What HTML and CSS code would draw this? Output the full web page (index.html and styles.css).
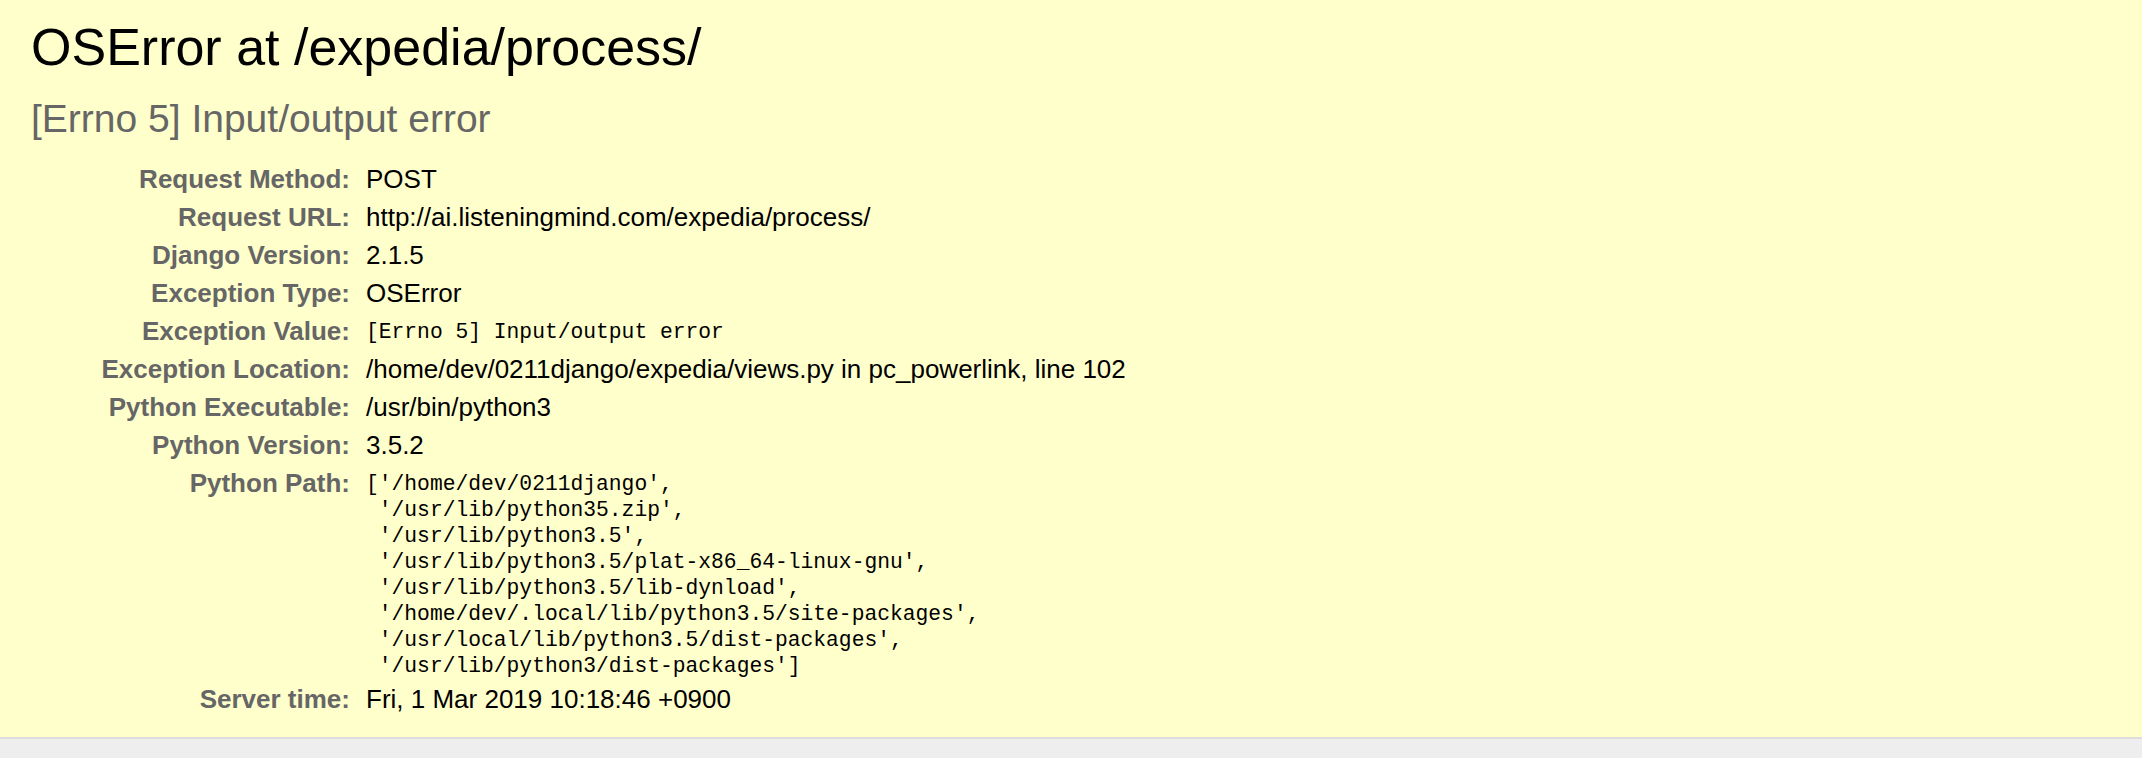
FILE: index.html
```html
<!DOCTYPE html>
<html lang="en">
<head>
<meta charset="utf-8">
<title>OSError at /expedia/process/</title>
<link rel="stylesheet" href="styles.css">
</head>
<body>
<div class="summary">
  <h1 class="title">OSError at /expedia/process/</h1>
  <h2 class="subtitle">[Errno 5] Input/output error</h2>
  <table class="meta">
    <tbody>
      <tr><th class="label">Request Method:</th><td class="value">POST</td></tr>
      <tr><th class="label">Request URL:</th><td class="value">http://ai.listeningmind.com/expedia/process/</td></tr>
      <tr><th class="label">Django Version:</th><td class="value">2.1.5</td></tr>
      <tr><th class="label">Exception Type:</th><td class="value">OSError</td></tr>
      <tr><th class="label">Exception Value:</th><td class="value"><pre class="code">[Errno 5] Input/output error</pre></td></tr>
      <tr><th class="label">Exception Location:</th><td class="value">/home/dev/0211django/expedia/views.py in pc_powerlink, line 102</td></tr>
      <tr><th class="label">Python Executable:</th><td class="value">/usr/bin/python3</td></tr>
      <tr><th class="label">Python Version:</th><td class="value">3.5.2</td></tr>
      <tr><th class="label">Python Path:</th><td class="value"><pre class="code">['/home/dev/0211django',
 '/usr/lib/python35.zip',
 '/usr/lib/python3.5',
 '/usr/lib/python3.5/plat-x86_64-linux-gnu',
 '/usr/lib/python3.5/lib-dynload',
 '/home/dev/.local/lib/python3.5/site-packages',
 '/usr/local/lib/python3.5/dist-packages',
 '/usr/lib/python3/dist-packages']</pre></td></tr>
      <tr><th class="label">Server time:</th><td class="value">Fri, 1 Mar 2019 10:18:46 +0900</td></tr>
    </tbody>
  </table>
</div>
<div class="next-section"></div>
</body>
</html>
```

FILE: styles.css
```css
html, body {
  margin: 0;
  padding: 0;
}

body {
  font-family: "Liberation Sans", Arial, Helvetica, sans-serif;
  font-size: 26px;
  color: #000;
  background: #eee;
}

.summary {
  background: #ffc;
  padding: 17px 31px 19px;
  border-bottom: 2px solid #ddd;
}

.title {
  margin: 0;
  font-size: 52px;
  line-height: 60px;
  font-weight: normal;
}

.subtitle {
  margin: 19px 0 0;
  font-size: 39px;
  line-height: 45px;
  font-weight: normal;
  color: #666;
}

.meta {
  margin-top: 19px;
  border-collapse: collapse;
  border: none;
  background: transparent;
}

.label {
  width: 319px;
  padding: 4px 0;
  text-align: right;
  vertical-align: top;
  font-weight: bold;
  color: #666;
  font-size: 26px;
  line-height: 30px;
}

.value {
  padding: 4px 0 4px 16px;
  vertical-align: top;
  font-size: 26px;
  line-height: 30px;
}

.code {
  margin: 0 0 -3px;
  padding-top: 3px;
  font-family: "Liberation Mono", "Courier New", monospace;
  font-size: 21.3px;
  line-height: 26px;
  white-space: pre;
}

.next-section {
  height: 60px;
  background: #eee;
}
```
